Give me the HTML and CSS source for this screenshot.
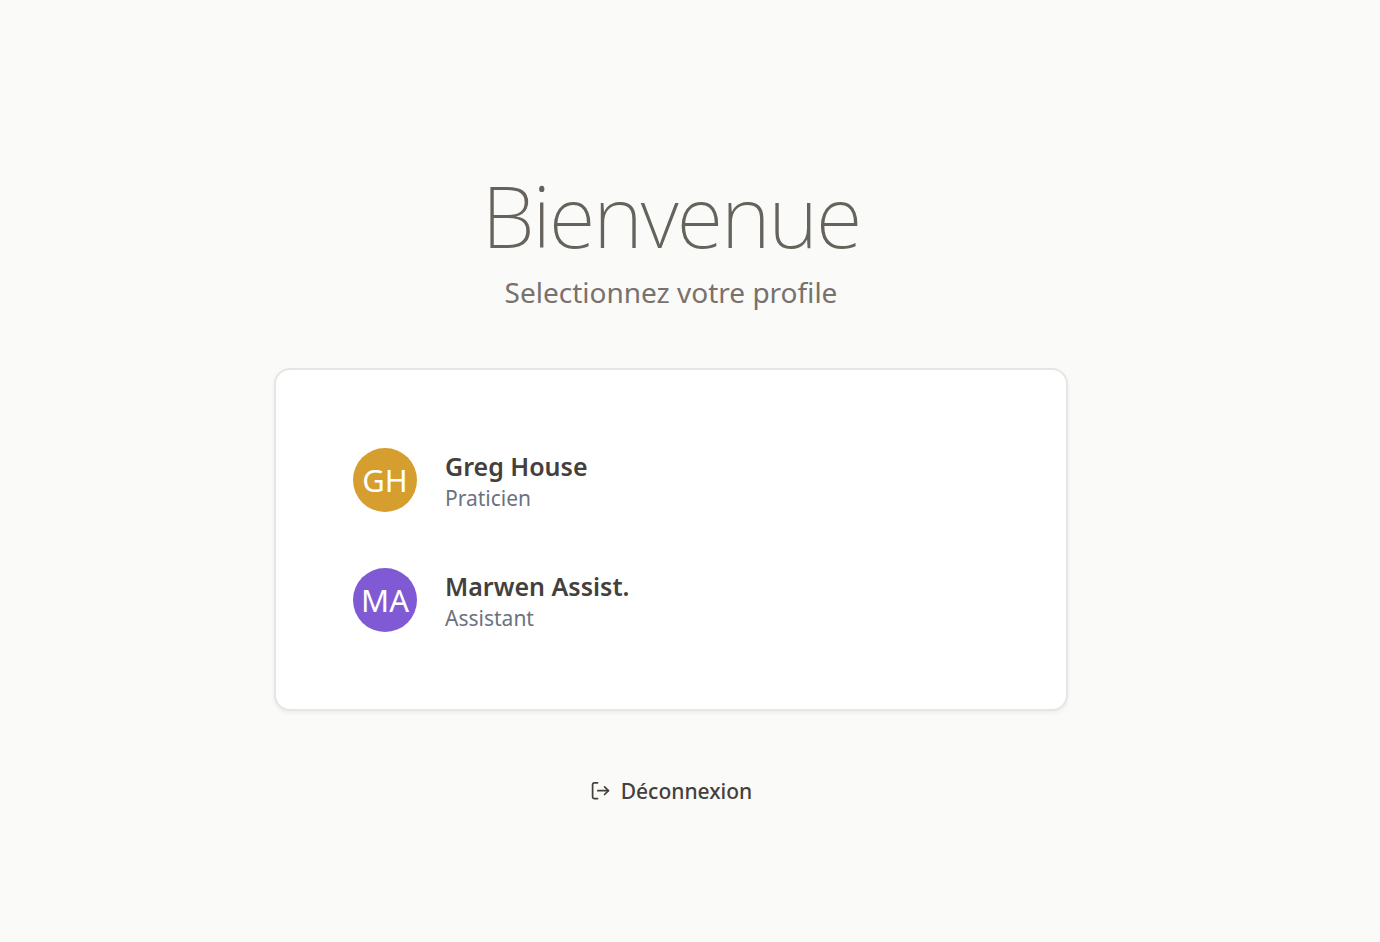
FILE: index.html
```html
<!DOCTYPE html>
<html lang="fr">
<head>
    <meta charset="UTF-8">
    <meta name="viewport" content="width=device-width, initial-scale=1.0">
    <title>Bienvenue</title>
    <link rel="stylesheet" href="styles.css">
</head>
<body>

    <main class="page">
        <header class="intro">
            <h1>Bienvenue</h1>
            <p>Selectionnez votre profile</p>
        </header>

        <div class="card">
            <button type="button" class="profile">
                <span class="avatar avatar-gold">GH</span>
                <span class="details">
                    <span class="name">Greg House</span>
                    <span class="role">Praticien</span>
                </span>
            </button>
            <button type="button" class="profile">
                <span class="avatar avatar-purple">MA</span>
                <span class="details">
                    <span class="name">Marwen Assist.</span>
                    <span class="role">Assistant</span>
                </span>
            </button>
        </div>

        <button type="button" class="logout">
            <svg viewBox="0 0 20 20" fill="none" stroke="currentColor" stroke-width="1.7" stroke-linecap="round" stroke-linejoin="round" aria-hidden="true">
                <path d="M7.6 1.8H4.2a1.6 1.6 0 0 0-1.6 1.6v12.6a1.6 1.6 0 0 0 1.6 1.6h3.4"/>
                <path d="M7.8 9.7h10.6"/>
                <path d="M14.6 5.9l3.8 3.8-3.8 3.8"/>
            </svg>
            Déconnexion
        </button>
    </main>

</body>
</html>
```
FILE: styles.css
```css
* {
    box-sizing: border-box;
}

body {
    margin: 0;
    background: #fafaf9;
    color: #44403c;
    font-family: "Noto Sans", sans-serif;
}

button {
    border: none;
    padding: 0;
    background: none;
    color: inherit;
    font-family: inherit;
    cursor: pointer;
}

.page {
    min-height: 100vh;
    padding: 32px 38px 0 0;
    display: flex;
    flex-direction: column;
    align-items: center;
    justify-content: center;
}

.intro {
    text-align: center;
}

.intro h1 {
    margin: 0;
    color: #66625c;
    font-size: 85px;
    font-weight: 200;
    line-height: 96px;
    letter-spacing: -2px;
}

.intro p {
    margin: 9px 0 0;
    color: #78716c;
    font-size: 28px;
    line-height: 40px;
}

.card {
    width: 100%;
    max-width: 794px;
    margin: 56px 0 64px;
    padding: 78px 77px 77px;
    display: flex;
    flex-direction: column;
    gap: 56px;
    background: white;
    border: 2px solid #e7e5e4;
    border-radius: 16px;
    box-shadow: 0 2px 4px rgba(0, 0, 0, 0.06);
}

.profile {
    display: flex;
    align-items: center;
    gap: 28px;
    text-align: left;
}

.avatar {
    display: flex;
    align-items: center;
    justify-content: center;
    width: 64px;
    height: 64px;
    border-radius: 50%;
    color: white;
    font-size: 31px;
}

.avatar-gold {
    background: #d69e2e;
}

.avatar-purple {
    background: #805ad5;
}

.details {
    display: flex;
    flex-direction: column;
}

.name {
    font-size: 25px;
    font-weight: 600;
    line-height: 36px;
}

.role {
    color: #6b7280;
    font-size: 21px;
    line-height: 28px;
}

.logout {
    display: flex;
    align-items: center;
    gap: 11px;
    font-size: 21px;
    font-weight: 500;
    line-height: 32px;
}

.logout svg {
    width: 20px;
    height: 20px;
}
```
